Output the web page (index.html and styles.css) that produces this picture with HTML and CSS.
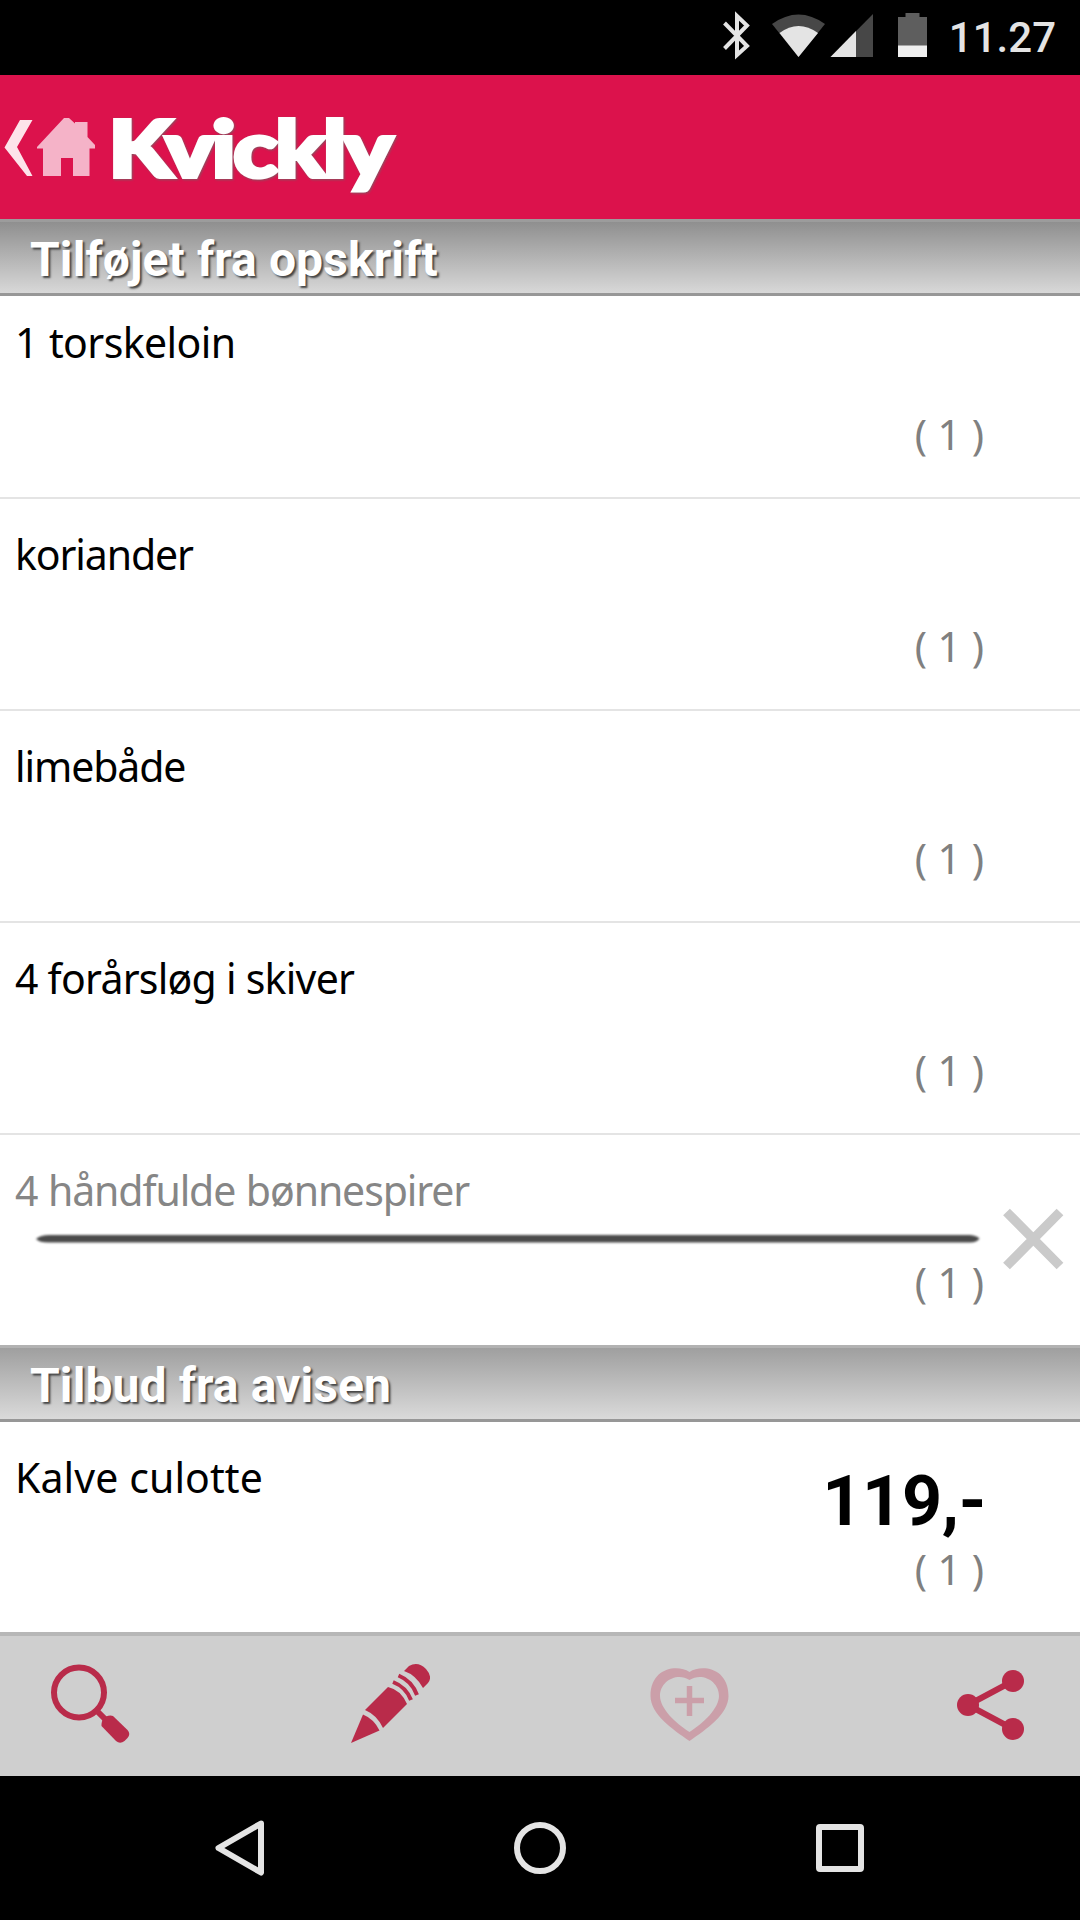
FILE: index.html
```html
<!DOCTYPE html>
<html lang="da">
  <head>
    <meta charset="utf-8">
    <title>Kvickly - Indkøbsliste</title>
    <link rel="stylesheet" href="styles.css">
  </head>
  <body>
    <div class="status-bar">
      <svg class="status-icons" width="216" height="75" viewBox="720 0 216 75">
        <path d="M724.5 23 L747 46 L737 55 V16 L747 25.500 L724.500 48.500" fill="none" stroke="#e4e4e4" stroke-width="4"/>
        <path d="M798.500 57 L772 24 Q798.500 5 825 24 Z" fill="#474747"/>
        <path d="M798.500 57 L779.500 33 Q798.500 19 818 33 Z" fill="#e4e4e4"/>
        <path d="M830.500 57 L873 14 V57 Z" fill="#474747"/>
        <path d="M830.500 57 L856 31 V57 Z" fill="#e4e4e4"/>
        <path d="M898 17 H905.500 V13 H919.500 V17 H927 V57 H898 Z" fill="#5e5e5e"/>
        <path d="M898 45.500 H927 V57 H898 Z" fill="#efefef"/>
      </svg>
      <span class="clock">11.27</span>
    </div>

    <div class="header">
      <svg class="home" width="100" height="144" viewBox="0 75 100 144">
        <path d="M20 120 H32.500 L17 147 L32.500 176 H27 L4.500 147.500 Z" fill="#fde3ea"/>
        <path d="M37 147 L64 118 H69 L75 123.500 V122 H87.500 V137 L95 145 V148.500 H89.500 V176 H73 V158 H61 V176 H43 V148.500 H37 Z" fill="#f5b3c8"/>
      </svg>
      <svg class="logo" width="310" height="144" viewBox="100 75 310 144">
        <text class="logo-text" x="108.500" y="177" textLength="282" lengthAdjust="spacingAndGlyphs">Kvickly</text>
      </svg>
    </div>

    <h2 class="section section-dark">Tilføjet fra opskrift</h2>
    <ul class="list">
      <li class="item item-first">
        <span class="name name-loose">1 torskeloin</span>
        <div class="info"><span class="count">( 1 )</span></div>
      </li>
      <li class="item">
        <span class="name">koriander</span>
        <div class="info"><span class="count">( 1 )</span></div>
      </li>
      <li class="item">
        <span class="name">limebåde</span>
        <div class="info"><span class="count">( 1 )</span></div>
      </li>
      <li class="item">
        <span class="name name-tight">4 forårsløg i skiver</span>
        <div class="info"><span class="count">( 1 )</span></div>
      </li>
      <li class="item item-last item-done">
        <span class="name">4 håndfulde bønnespirer</span>
        <div class="info"><span class="count">( 1 )</span></div>
        <svg class="strike" width="1080" height="70" viewBox="0 0 1080 70">
          <path class="strike-line" d="M36 35 Q40 31 50 31 H970 Q977 31.500 979.500 34.500 Q977 38.500 970 38.500 H50 Q40 39 36 35 Z"/>
          <path class="cross" d="M1006.500 8 L1060 62 M1060 8 L1006.500 62"/>
        </svg>
      </li>
    </ul>

    <h2 class="section">Tilbud fra avisen</h2>
    <ul class="list">
      <li class="item item-last">
        <span class="name name-wide">Kalve culotte</span>
        <div class="info">
          <span class="price">119,-</span>
          <span class="count">( 1 )</span>
        </div>
      </li>
    </ul>

    <div class="toolbar">
      <svg width="80" height="84" viewBox="50 1662 80 84">
        <circle cx="79" cy="1692.500" r="25" fill="none" stroke="#b92b4a" stroke-width="6"/>
        <path d="M96 1710 L108 1722" stroke="#b92b4a" stroke-width="6"/>
        <path d="M101.500 1724 Q102 1718 106 1716.500 Q110 1715 113 1716 L127.500 1730 Q131 1734 127.500 1738 L124.500 1741 Q120 1744.500 116 1741 L101.500 1726 Z" fill="#b92b4a"/>
      </svg>
      <svg width="80" height="84" viewBox="350 1662 80 84">
        <g fill="#b92b4a">
          <path d="M351 1743 L363 1714.500 Q374 1719 379.500 1730.500 Z"/>
          <path d="M365 1710 L388 1687 Q401 1690 407 1704 L383 1728 Q377 1715 365 1710 Z"/>
          <path d="M404 1671 L409 1666 Q418 1661 426 1669 Q433 1677 428 1683 L423 1688 Q416 1675 404 1671 Z"/>
        </g>
        <g fill="none" stroke="#b92b4a" stroke-width="4">
          <path d="M393 1682 Q406 1687 411 1700"/>
          <path d="M398.500 1675.500 Q412 1681 417 1695"/>
        </g>
      </svg>
      <svg width="80" height="84" viewBox="650 1662 80 84">
        <path fill="#cb9fa9" fill-rule="evenodd" d="M689.500 1672 C702 1664 728.500 1668 728.500 1696 C728.500 1714 707 1729 689.500 1741 C672 1729 650.500 1714 650.500 1696 C650.500 1668 677 1664 689.500 1672 Z M689.500 1680 C677 1672 660 1681 660 1696 C660 1708 675 1723 689.500 1732 C704 1723 719 1708 719 1696 C719 1681 702 1672 689.500 1680 Z"/>
        <path d="M675 1700.500 H704 M689.500 1686 V1716" stroke="#cb9fa9" stroke-width="5.500"/>
      </svg>
      <svg width="80" height="84" viewBox="950 1662 80 84">
        <path d="M1013 1681 L968 1705 L1013 1729" fill="none" stroke="#b92b4a" stroke-width="6"/>
        <circle cx="1013" cy="1681" r="11" fill="#b92b4a"/>
        <circle cx="968" cy="1705" r="11" fill="#b92b4a"/>
        <circle cx="1013" cy="1729" r="11" fill="#b92b4a"/>
      </svg>
    </div>

    <div class="nav-bar">
      <svg width="80" height="80" viewBox="200 1808 80 80">
        <path d="M261 1823.500 L218.500 1848 L261 1872.500 Z"/>
      </svg>
      <svg width="80" height="80" viewBox="500 1808 80 80">
        <circle cx="540" cy="1848" r="23"/>
      </svg>
      <svg width="80" height="80" viewBox="800 1808 80 80">
        <rect x="819" y="1827" width="42" height="42" rx="1"/>
      </svg>
    </div>
  </body>
</html>
```
FILE: styles.css
```css
* {
  box-sizing: border-box;
}

body {
  margin: 0;
  width: 1080px;
  height: 1920px;
  background-color: #fff;
  font-family: "Noto Sans", sans-serif;
  overflow: hidden;
}

svg {
  display: block;
}

.status-bar {
  display: flex;
  justify-content: flex-end;
  height: 75px;
  padding-right: 24px;
  background-color: #000;
}

.clock {
  width: 120px;
  text-align: right;
  font-family: Roboto, sans-serif;
  font-size: 42px;
  font-weight: 500;
  line-height: 75px;
  color: #e4e4e4;
}

.header {
  display: flex;
  height: 144px;
  background-color: #dc124c;
}

.logo-text {
  font-family: Lato, sans-serif;
  font-size: 78px;
  font-weight: 900;
  letter-spacing: -2px;
  fill: #fff;
  stroke: #fff;
  stroke-width: 4px;
  filter: drop-shadow(1px 1px 1px #8a5060);
}

.section {
  height: 77px;
  margin: 0;
  padding-left: 30px;
  border-top: 3px solid #b2b2b2;
  border-bottom: 3px solid #979797;
  background-image: linear-gradient(#9f9f9f, #dadada);
  font-family: Roboto, sans-serif;
  font-size: 48px;
  font-weight: 700;
  line-height: 76px;
  letter-spacing: 0.1px;
  color: #fff;
  text-shadow: 2px 2px 2px #444;
}

.section-dark {
  border-top-color: #9c9c9c;
  background-image: linear-gradient(#8f8f8f, #d8d8d8);
}

.list {
  margin: 0;
  padding: 0;
  list-style: none;
}

.item {
  position: relative;
  display: flex;
  justify-content: space-between;
  align-items: flex-end;
  height: 212px;
  padding: 0 96px 38px 15px;
  border-bottom: 2px solid #e4e4e4;
}

.item-first {
  height: 203px;
}

.item-last {
  height: 210px;
  border-bottom: none;
}

.name {
  margin-bottom: 92px;
  font-size: 41px;
  line-height: 50px;
  letter-spacing: -1.1px;
  word-spacing: 1px;
  color: #000;
}

.name-tight {
  letter-spacing: -0.75px;
  word-spacing: 0;
}

.name-loose {
  letter-spacing: -0.6px;
}

.name-wide {
  letter-spacing: 0.1px;
  word-spacing: 0;
}

.info {
  display: flex;
  flex-direction: column;
  align-items: flex-end;
}

.price {
  margin-right: -2px;
  margin-bottom: 8px;
  font-family: Roboto, sans-serif;
  font-size: 70px;
  font-weight: 700;
  line-height: 70px;
  letter-spacing: -0.3px;
}

.count {
  font-size: 41px;
  line-height: 50px;
  color: #808080;
}

.item-done .name {
  color: #868686;
}

/* line drawn across a bought item, with its delete cross */
.strike {
  position: absolute;
  left: 0;
  top: 69px;
}

.strike-line {
  fill: #4a4a4a;
  filter: blur(0.8px);
}

.cross {
  stroke: #cacaca;
  stroke-width: 9.5px;
}

.toolbar {
  display: flex;
  justify-content: space-between;
  height: 144px;
  padding: 26px 50px 0;
  border-top: 4px solid #b7b7b7;
  background-color: #cfcfcf;
}

.nav-bar {
  display: flex;
  justify-content: space-between;
  align-items: center;
  height: 144px;
  padding: 0 200px;
  background-color: #000;
}

.nav-bar svg {
  fill: none;
  stroke: #e4e4e4;
  stroke-width: 6px;
  stroke-linejoin: round;
}
```
